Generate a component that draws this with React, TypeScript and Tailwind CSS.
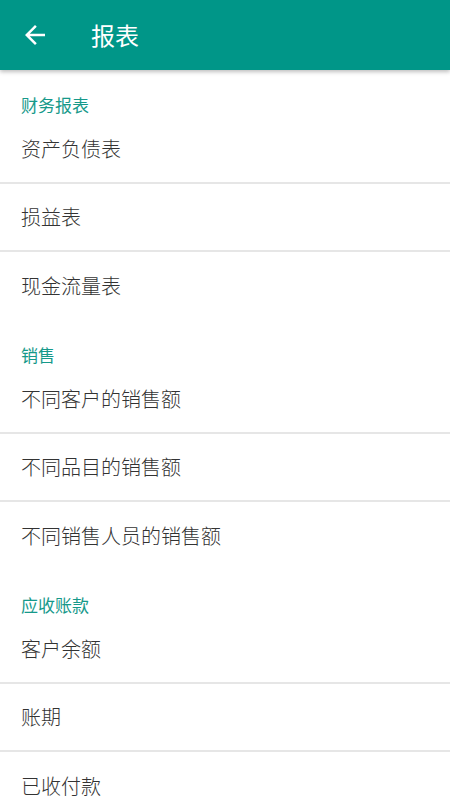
const sections = [
  { title: "财务报表", items: ["资产负债表", "损益表", "现金流量表"] },
  { title: "销售", items: ["不同客户的销售额", "不同品目的销售额", "不同销售人员的销售额"] },
  { title: "应收账款", items: ["客户余额", "账期", "已收付款"] },
];

export default function App() {
  return (
    <div
      className="w-[450px] h-[800px] overflow-hidden bg-white"
      style={{ fontFamily: '"Noto Sans CJK SC", "Noto Sans", sans-serif' }}
    >
      <header className="relative z-10 flex items-center h-[70px] bg-[#009688] shadow-[0_2px_4px_rgba(0,0,0,0.25)]">
        <button className="ml-[20px] w-[30px] h-[30px] flex items-center justify-center text-white">
          <svg width="30" height="30" viewBox="0 0 24 24" fill="currentColor">
            <path d="M20 11H7.83l5.59-5.59L12 4l-8 8 8 8 1.41-1.41L7.83 13H20v-2z" />
          </svg>
        </button>
        <h1 className="ml-[41px] text-[24px] leading-none text-white">报表</h1>
      </header>

      <div>
        {sections.map((sec) => (
          <section key={sec.title}>
            <div className="h-[46px] pl-[21px] pt-[26px] text-[17px] leading-[17px] text-[#16998a]">
              {sec.title}
            </div>
            {sec.items.map((item, i) => (
              <div
                key={item}
                className={`h-[68px] pl-[21px] flex items-center text-[20px] font-light text-[#333333] ${
                  i < sec.items.length - 1 ? "border-b-2 border-[#e6e6e6]" : ""
                }`}
              >
                {item}
              </div>
            ))}
          </section>
        ))}
      </div>
    </div>
  );
}
